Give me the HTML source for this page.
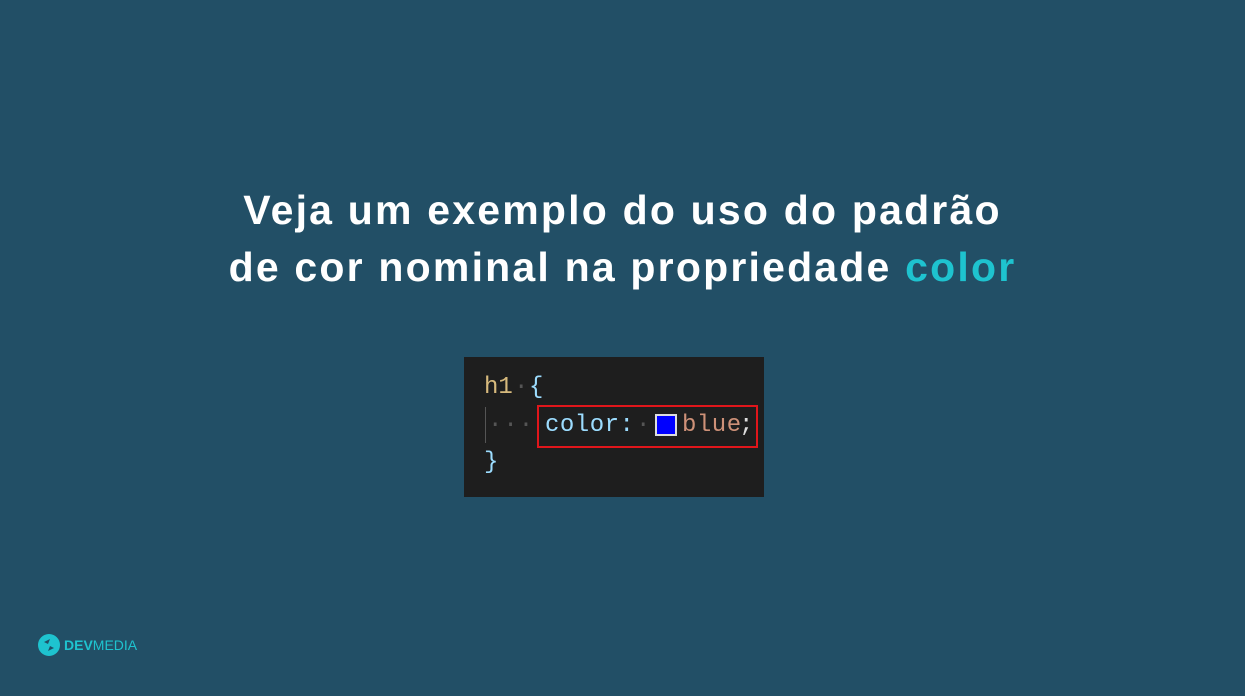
<!DOCTYPE html>
<html><head><meta charset="utf-8"><style>
html,body{margin:0;padding:0}
body{width:1245px;height:696px;background:#224f66;position:relative;overflow:hidden;font-family:"Liberation Sans",sans-serif}
.t{position:absolute;left:0;width:1245px;text-align:center;color:#fff;font-weight:bold;font-size:41px;line-height:57px;top:182px;letter-spacing:2.2px}
.t span{color:#1ec3cf}
.code{position:absolute;left:464px;top:357px;width:300px;height:140px;background:#1e1e1e;font-family:"Liberation Mono",monospace;font-size:24px}
.a{position:absolute;white-space:pre;line-height:37px}
.box{position:absolute;left:73px;top:48px;width:221px;height:43px;border:2px solid #e0161b;box-sizing:border-box}
.sw{position:absolute;left:191px;top:57px;width:22px;height:22px;background:#0000ff;border:2px solid #ddd;box-sizing:border-box}
.logo{position:absolute;left:38px;top:634px;display:flex;align-items:center;color:#1ec3cf;font-weight:bold;font-size:14px}
</style></head><body>
<div class="t">Veja um exemplo do uso do padrão<br>de cor nominal na propriedade <span>color</span></div>
<div class="code">
<div class="a" style="left:20px;top:12px;color:#d7ba7d">h1</div>
<div class="a" style="left:50px;top:12px;color:#555">·</div>
<div class="a" style="left:65px;top:12px;color:#9cdcfe">{</div>
<div style="position:absolute;left:21px;top:50px;width:1px;height:36px;background:#555"></div>
<div class="a" style="left:24px;top:50px;color:#555;letter-spacing:1px">···</div>
<div class="a" style="left:81px;top:50px;color:#9cdcfe;letter-spacing:0.5px">color:</div>
<div class="a" style="left:172px;top:50px;color:#555">·</div>
<div class="sw"></div>
<div class="a" style="left:218px;top:50px;color:#ce9178;letter-spacing:0.5px">blue</div>
<div class="a" style="left:275px;top:50px;color:#ddd">;</div>
<div class="box"></div>
<div class="a" style="left:20px;top:87px;color:#9cdcfe">}</div>
</div>
<div class="logo"><svg width="22" height="22" viewBox="0 0 22 22"><circle cx="11" cy="11" r="11" fill="#1ec3cf"/><path d="M6 8 L12 5 L10 10 Z M16 14 L10 17 L12 12 Z" fill="#224f66"/></svg><span style="margin-left:4px">DEV</span><span style="font-weight:normal">MEDIA</span></div>
</body></html>
